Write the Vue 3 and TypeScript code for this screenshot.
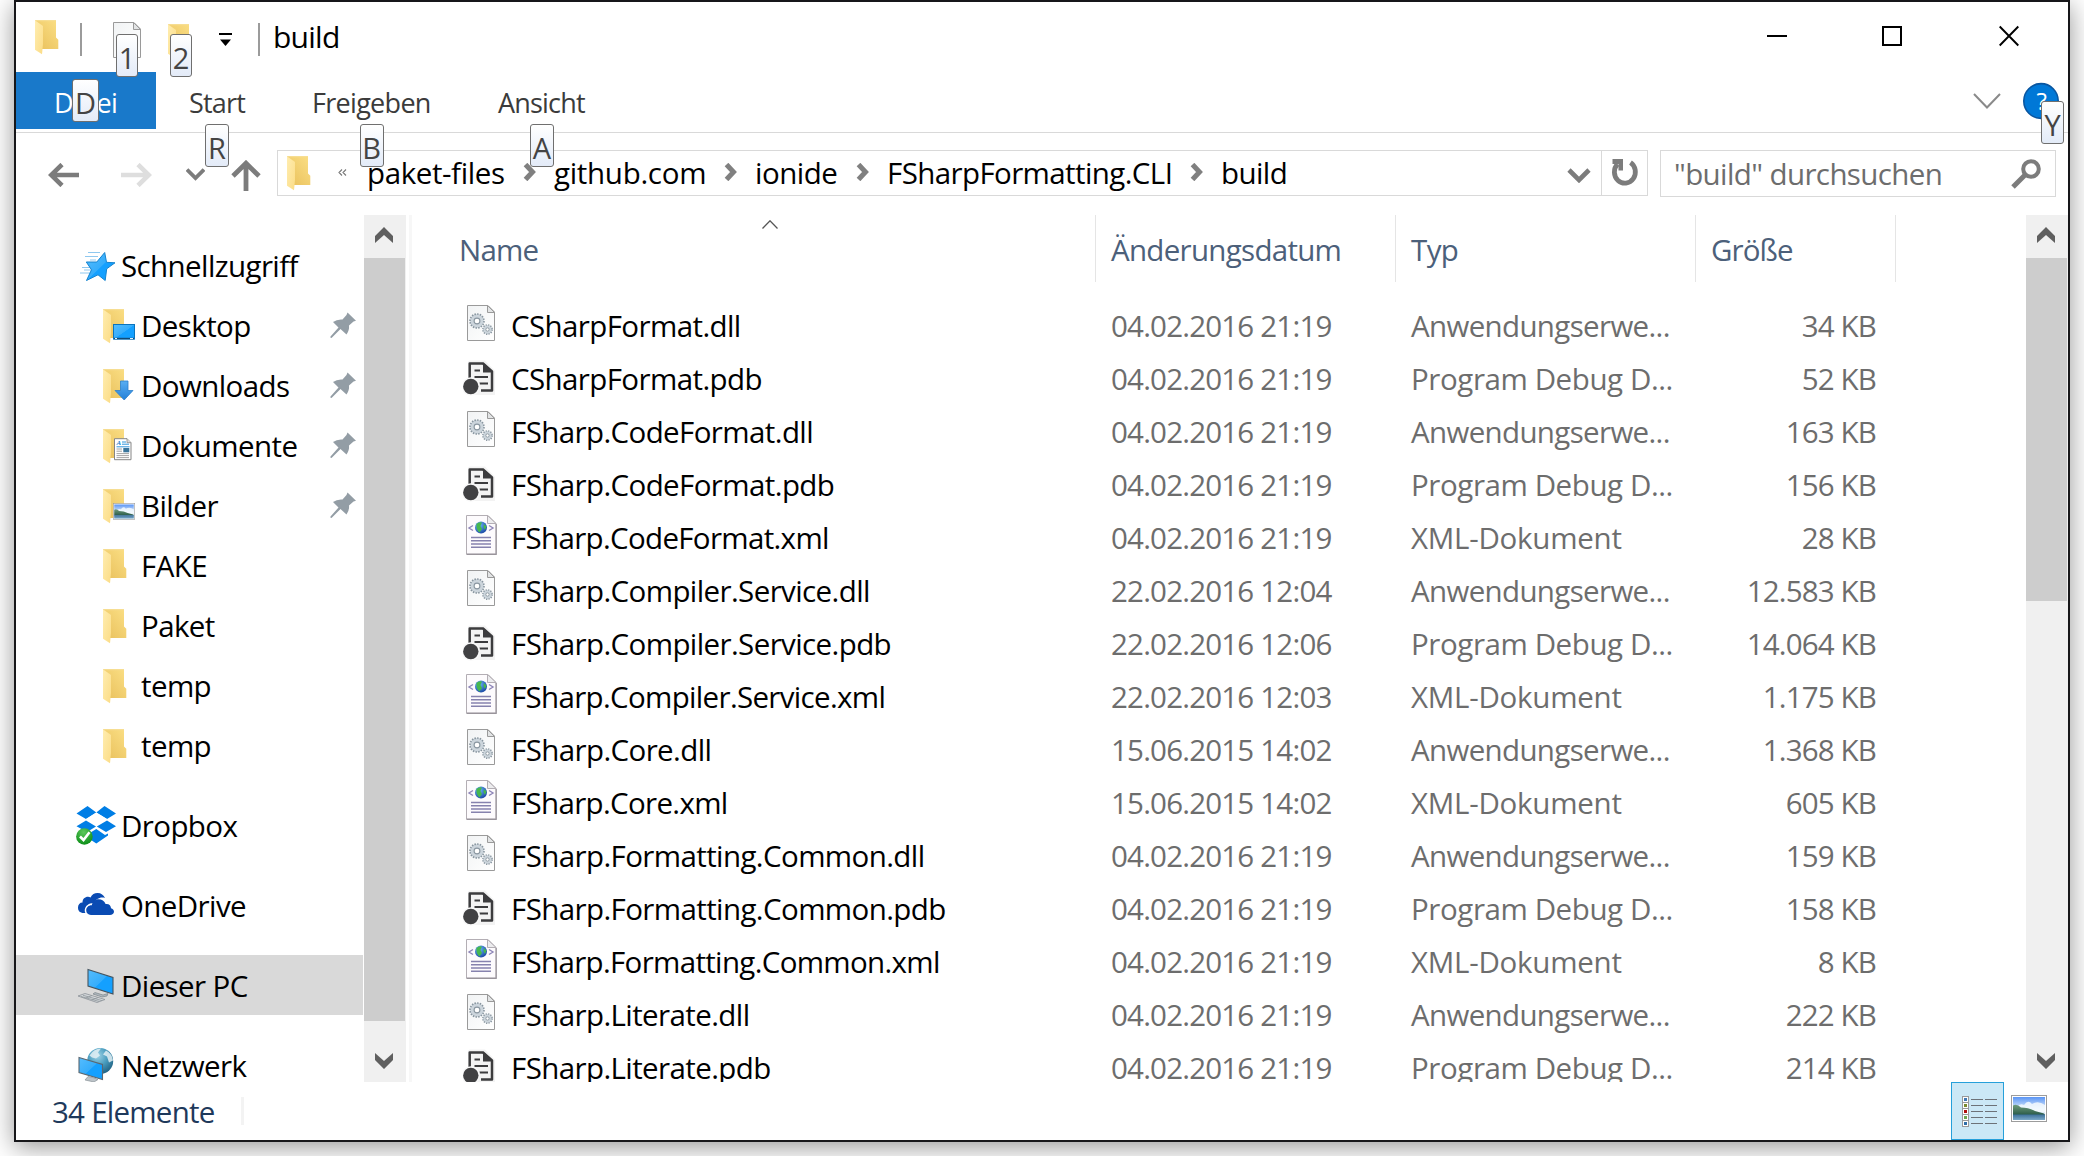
<script setup lang="ts">
interface NavItem {
  label: string
  icon: string
  level: 'root' | 'child'
  pinned?: boolean
  selected?: boolean
  gap?: boolean
}

interface FileItem {
  name: string
  date: string
  kind: 'dll' | 'pdb' | 'xml'
  size: string
}

const tabs = [
  { label: 'Start', key: 'R', cls: 'tab-start' },
  { label: 'Freigeben', key: 'B', cls: 'tab-share' },
  { label: 'Ansicht', key: 'A', cls: 'tab-view' },
]

const crumbs = ['paket-files', 'github.com', 'ionide', 'FSharpFormatting.CLI', 'build']

const navItems: NavItem[] = [
  { label: 'Schnellzugriff', icon: 'star', level: 'root' },
  { label: 'Desktop', icon: 'desktop', level: 'child', pinned: true },
  { label: 'Downloads', icon: 'downloads', level: 'child', pinned: true },
  { label: 'Dokumente', icon: 'documents', level: 'child', pinned: true },
  { label: 'Bilder', icon: 'pictures', level: 'child', pinned: true },
  { label: 'FAKE', icon: 'folder', level: 'child' },
  { label: 'Paket', icon: 'folder', level: 'child' },
  { label: 'temp', icon: 'folder', level: 'child' },
  { label: 'temp', icon: 'folder', level: 'child' },
  { label: 'Dropbox', icon: 'dropbox', level: 'root', gap: true },
  { label: 'OneDrive', icon: 'onedrive', level: 'root', gap: true },
  { label: 'Dieser PC', icon: 'pc', level: 'root', gap: true, selected: true },
  { label: 'Netzwerk', icon: 'network', level: 'root', gap: true },
]

const kinds = {
  dll: 'Anwendungserwe...',
  pdb: 'Program Debug D...',
  xml: 'XML-Dokument',
}

const files: FileItem[] = [
  { name: 'CSharpFormat.dll', date: '04.02.2016 21:19', kind: 'dll', size: '34 KB' },
  { name: 'CSharpFormat.pdb', date: '04.02.2016 21:19', kind: 'pdb', size: '52 KB' },
  { name: 'FSharp.CodeFormat.dll', date: '04.02.2016 21:19', kind: 'dll', size: '163 KB' },
  { name: 'FSharp.CodeFormat.pdb', date: '04.02.2016 21:19', kind: 'pdb', size: '156 KB' },
  { name: 'FSharp.CodeFormat.xml', date: '04.02.2016 21:19', kind: 'xml', size: '28 KB' },
  { name: 'FSharp.Compiler.Service.dll', date: '22.02.2016 12:04', kind: 'dll', size: '12.583 KB' },
  { name: 'FSharp.Compiler.Service.pdb', date: '22.02.2016 12:06', kind: 'pdb', size: '14.064 KB' },
  { name: 'FSharp.Compiler.Service.xml', date: '22.02.2016 12:03', kind: 'xml', size: '1.175 KB' },
  { name: 'FSharp.Core.dll', date: '15.06.2015 14:02', kind: 'dll', size: '1.368 KB' },
  { name: 'FSharp.Core.xml', date: '15.06.2015 14:02', kind: 'xml', size: '605 KB' },
  { name: 'FSharp.Formatting.Common.dll', date: '04.02.2016 21:19', kind: 'dll', size: '159 KB' },
  { name: 'FSharp.Formatting.Common.pdb', date: '04.02.2016 21:19', kind: 'pdb', size: '158 KB' },
  { name: 'FSharp.Formatting.Common.xml', date: '04.02.2016 21:19', kind: 'xml', size: '8 KB' },
  { name: 'FSharp.Literate.dll', date: '04.02.2016 21:19', kind: 'dll', size: '222 KB' },
  { name: 'FSharp.Literate.pdb', date: '04.02.2016 21:19', kind: 'pdb', size: '214 KB' },
]

const thumbColors = ['#3f78b5', '#7a8a2e', '#b01010', '#6aa84f', '#2f6ea8']
</script>

<template>
  <svg class="sprite" aria-hidden="true">
    <defs>
      <linearGradient id="g-back" x1="0" y1="1" x2="1" y2="0">
        <stop offset="0" stop-color="#e8bf5a" />
        <stop offset="1" stop-color="#fbdf85" />
      </linearGradient>
      <linearGradient id="g-front" x1="0" y1="0" x2="1" y2="1">
        <stop offset="0" stop-color="#ffedb0" />
        <stop offset="1" stop-color="#fbdc86" />
      </linearGradient>
      <linearGradient id="g-blue" x1="0" y1="0" x2="1" y2="1">
        <stop offset="0" stop-color="#56bdfd" />
        <stop offset=".5" stop-color="#36adfb" />
        <stop offset=".52" stop-color="#14a0ff" />
        <stop offset="1" stop-color="#14a0ff" />
      </linearGradient>
      <linearGradient id="g-arrow" x1="0" y1="0" x2="0" y2="1">
        <stop offset="0" stop-color="#59aef2" />
        <stop offset="1" stop-color="#2480d8" />
      </linearGradient>
      <linearGradient id="g-page" x1="0" y1="0" x2="1" y2="1">
        <stop offset="0" stop-color="#f1f3f4" />
        <stop offset="1" stop-color="#ffffff" />
      </linearGradient>
      <linearGradient id="g-sky" x1="0" y1="0" x2="0" y2="1">
        <stop offset="0" stop-color="#5a95f5" />
        <stop offset=".55" stop-color="#e4f0fb" />
        <stop offset="1" stop-color="#d5e6f2" />
      </linearGradient>
      <linearGradient id="g-sea" x1="0" y1="0" x2="0" y2="1">
        <stop offset="0" stop-color="#3b6f9a" />
        <stop offset="1" stop-color="#7ba9c8" />
      </linearGradient>
      <linearGradient id="g-hill" x1="0" y1="0" x2="0" y2="1">
        <stop offset="0" stop-color="#6f9c7c" />
        <stop offset="1" stop-color="#2a5a48" />
      </linearGradient>
      <radialGradient id="g-ok" cx=".45" cy=".25" r=".8">
        <stop offset="0" stop-color="#5cc85c" />
        <stop offset="1" stop-color="#068a12" />
      </radialGradient>
      <radialGradient id="g-globe" cx=".4" cy=".3" r=".75">
        <stop offset="0" stop-color="#9fd3e6" />
        <stop offset=".5" stop-color="#4a9dbf" />
        <stop offset="1" stop-color="#1e5f80" />
      </radialGradient>
      <radialGradient id="g-web" cx=".35" cy=".3" r=".8">
        <stop offset="0" stop-color="#6fb7ff" />
        <stop offset="1" stop-color="#123f9c" />
      </radialGradient>
    </defs>

    <symbol id="folder" viewBox="0 0 24 35">
      <path d="M0 .3H21V17.6L23.3 19.8V29H6Z" fill="url(#g-back)" />
      <path d="M0 .3L8 6V24L7 34.3L0 29.8Z" fill="url(#g-front)" />
      <path d="M0 .3H21V1.3H1.5Z" fill="#f6dc8f" />
    </symbol>

    <symbol id="landscape" viewBox="0 0 36 27">
      <rect x=".5" y=".5" width="35" height="26" fill="#fff" stroke="#9c9c9c" />
      <rect x="2" y="2" width="32" height="23" fill="url(#g-sky)" />
      <path d="M6 12Q9 8 13 10Q17 4 21 9Q27 5 34 10V17H6Z" fill="#f5fafe" opacity=".85" />
      <path d="M2 10.500Q6 8.500 10 12.500Q18 12.500 24 16L33 18.500L34 20H2Z" fill="url(#g-hill)" />
      <rect x="2" y="19.500" width="32" height="5.500" fill="url(#g-sea)" />
    </symbol>

    <symbol id="star" viewBox="0 0 40 40">
      <g transform="translate(2 3)">
        <path d="M10 4.500H22M7 8.500H20M12 12H18M4 19.500H13M6 22H14M2 25H12" stroke="#8fc8ef" stroke-width="1" />
        <path d="M26.700 4.500L28.500 14.300L37 14.800L28.700 20.800L27.200 32.500L20 26.800L8.500 32.500L13.500 21.800L8.300 14L18.800 14Z"
          fill="url(#g-blue)" stroke="#1583cf" stroke-width="1" stroke-linejoin="round" />
      </g>
    </symbol>

    <symbol id="desktop" viewBox="0 0 34 36">
      <use href="#folder" x="1" y="0" width="24" height="35" />
      <rect x="11.5" y="15.500" width="21" height="14.6" fill="url(#g-blue)" stroke="#0b74bd" />
      <path d="M12 29.500H32" stroke="#134a73" stroke-width="1.4" />
      <path d="M13 29.500H15M28 29.500H31" stroke="#e6f4fd" stroke-width="1.2" />
    </symbol>

    <symbol id="downloads" viewBox="0 0 34 36">
      <use href="#folder" x="1" y="0" width="24" height="35" />
      <path d="M18.5 12H26V21.5H31L22.2 31L13 21.5H18.5Z" fill="url(#g-arrow)" stroke="#2b7fcc" stroke-width=".8" />
    </symbol>

    <symbol id="documents" viewBox="0 0 34 36">
      <use href="#folder" x="1" y="0" width="24" height="35" />
      <path d="M12.5 9.7H25L29 13.7V30.7H12.5Z" fill="#fff" stroke="#858585" />
      <path d="M25 9.7V13.7H29" fill="#ddd" stroke="#858585" stroke-width=".8" />
      <text x="14.5" y="16" class="doc-letter">A</text>
      <path d="M20 13H24M20 15.2H27M14.5 17.8H27.5" stroke="#2f95da" stroke-width="1" />
      <path d="M14.5 20H20M14.5 22.2H20M14.5 24.6H27M14.5 26.6H27M14.5 28.6H27" stroke="#9a9a9a" stroke-width=".9" />
      <rect x="21.3" y="19" width="6" height="4.3" fill="#39759b" />
    </symbol>

    <symbol id="pictures" viewBox="0 0 34 36">
      <use href="#folder" x="1" y="0" width="24" height="35" />
      <use href="#landscape" x="11" y="14" width="22" height="17" />
    </symbol>

    <symbol id="dropbox" viewBox="0 0 40 40">
      <path d="M11.500 1L20.300 7.500L10 14L0.500 8.500Z M28.500 1L40 8.500L31 14L20.300 7.500Z M10 15.500L20 21.500L11 27L.5 21.300Z M31 15.500L40 21.300L30 27L20.800 21.500Z"
        fill="#007ee5" />
      <path d="M20.300 24L29 30L32 28.500V30.500L20.300 38.500L12 33V29Z" fill="#007ee5" />
      <path d="M20.300 7.500L31 14L20.300 20.500L10 14Z" fill="#fff" />
      <circle cx="8.400" cy="31.500" r="8.300" fill="url(#g-ok)" />
      <path d="M4 31.500L7.500 35L13.500 27.300" fill="none" stroke="#fff" stroke-width="2.6" />
    </symbol>

    <symbol id="onedrive" viewBox="0 0 40 40">
      <path d="M8 28C3.500 28 2 25.500 2 22.500C2 19.500 3.800 17.500 6.500 17.500C6.500 14 9 11.800 12 11.800C13 11.800 13.800 12 14.500 12.400C16 9.500 18.500 8 21.500 8C25 8 27.800 10 29 13C24.500 11.500 19.500 14 18.500 18C13.500 17.500 9.500 20.500 8.800 24.500C8.600 26 9 27.500 9.500 28Z" fill="#0a4bb3" />
      <path d="M15 30C12 30 10.200 28 10.200 25.300C10.200 22.200 12.800 20 15.800 20.200C16.500 16.500 19 14.200 22.500 14.200C25.800 14.200 28.500 16 29.600 19C33 18.500 35 20.500 35 23.300C36.700 23.500 38 25 38 26.700C38 28.600 36.200 30 34 30Z" fill="#0a4bb3" />
    </symbol>

    <symbol id="pc" viewBox="0 0 40 40">
      <path d="M12 4.500L37 12.500V29L12 21Z" fill="url(#g-blue)" stroke="#45545f" stroke-width="1.1" />
      <path d="M19 27.500L27 30L32 28.500L31 31L26 32L17 29Z" fill="#aeb6bc" stroke="#707a82" stroke-width=".6" />
      <path d="M2 31L9 28.500L29 34.500L21 37.500Z" fill="#d3d7da" stroke="#8b9298" stroke-width=".8" />
      <path d="M5 31.500L23 36.400M7 30.300L26 35.600M10 33L16 30.500M16 35L22 32.500" stroke="#8e959a" stroke-width=".8" />
    </symbol>

    <symbol id="network" viewBox="0 0 40 40">
      <circle cx="24.200" cy="16" r="13" fill="url(#g-globe)" />
      <path d="M13.500 10.500Q18 3.500 25 3.500L22 7.500L24 10.500L20 13.500L16 12.500Z M30 5.500Q36 8.500 37 15.500L33 17.500L31 11.500L27 9.500Z" fill="#e3f0f5" opacity=".85" />
      <path d="M3 12.500L26.500 19.500V34.500L3 27.500Z" fill="url(#g-blue)" stroke="#5b6770" stroke-width="1.1" />
      <path d="M12 31.500L17 32.500L22 34.500L18 37L9 35Z" fill="#bcc3c8" stroke="#7b848b" stroke-width=".6" />
    </symbol>

    <symbol id="pin" viewBox="0 0 26 27">
      <path d="M17.500 .5L26 8.700L23.500 9.500L19 13.500Q19.500 18.500 16.500 22.500L10.500 17L1.500 26L.3 25.500L.5 24.500L8.500 15.500L3 10Q7 7 12.500 7.500L16.500 3Z"
        fill="#939da5" />
    </symbol>

    <symbol id="page" viewBox="0 0 28 36">
      <path d="M.5 .5H21L27.500 7V35.500H.5Z" fill="url(#g-page)" stroke="#9a9a9a" />
      <path d="M20.500 .5V7.500H27.500Z" fill="#e2e4e5" stroke="#9a9a9a" />
    </symbol>

    <symbol id="dll" viewBox="0 0 34 40">
      <use href="#page" x="4" y="2" width="28" height="36" />
      <circle cx="14" cy="18" r="5" fill="none" stroke="#ccd5dc" stroke-width="3.800" />
      <circle cx="14" cy="18" r="7" fill="none" stroke="#8996a0" stroke-width="1.600" stroke-dasharray="1.500 1.240" />
      <circle cx="14" cy="18" r="2.900" fill="#fff" stroke="#8996a0" stroke-width="1.100" />
      <circle cx="24.500" cy="26.500" r="3.300" fill="none" stroke="#ccd5dc" stroke-width="2.600" />
      <circle cx="24.500" cy="26.500" r="4.700" fill="none" stroke="#8996a0" stroke-width="1.400" stroke-dasharray="1.300 1.160" />
      <circle cx="24.500" cy="26.500" r="1.700" fill="#fff" stroke="#8996a0" stroke-width="1" />
    </symbol>

    <symbol id="pdb" viewBox="0 0 34 40">
      <path d="M5 3.500Q5 1.500 7 1.500H22L32 12V36H5Z" fill="#f3f3f3" />
      <path d="M6.700 19V4.500H20L29 12.500V31.500H18" fill="none" stroke="#3c3c3e" stroke-width="2.500" stroke-linejoin="round" />
      <path d="M20 3.500L30 13.500H20Z" fill="#3c3c3e" />
      <path d="M11.500 11.500H17M11.500 18H25M16.500 24.500H25" stroke="#3c3c3e" stroke-width="2.200" />
      <circle cx="7.800" cy="27.500" r="9.300" fill="#f8f8f8" />
      <circle cx="7.800" cy="27.500" r="7.700" fill="#414143" />
    </symbol>

    <symbol id="xml" viewBox="0 0 34 42">
      <path d="M3.500 1.500H25L33 9.500V40H3.500Z" fill="#fdfbfd" stroke="#b3aeb4" />
      <path d="M3.500 40.300H33.200V10" fill="none" stroke="#99949b" stroke-width="1.200" />
      <path d="M24.500 1.500V9.500H33Z" fill="#ececee" stroke="#b3aeb4" />
      <circle cx="18" cy="13.500" r="6" fill="url(#g-web)" />
      <path d="M13.500 10Q16 7.500 19 8.500L17.500 12L19 15L16.500 18.500Q13 16 13.500 10Z M21 10L23.500 12.500L22 16L20.500 13Z" fill="#47b84f" />
      <path d="M10 11.500L6 14L10 16.500M26 11.500L30 14L26 16.500" fill="none" stroke="#8e86b8" stroke-width="1.400" />
      <path d="M8 23.500H28M8 26.700H28M8 30H28M8 33.200H28" stroke="#8682ae" stroke-width="1.400" />
    </symbol>
  </svg>

  <main class="window">
    <header class="titlebar">
      <svg class="title-folder"><use href="#folder" /></svg>
      <i class="bar bar-one"></i>
      <span class="quick quick-page">
        <svg width="28" height="36"><use href="#page" /></svg>
        <kbd class="tip tip-1">1</kbd>
      </span>
      <span class="quick quick-folder">
        <svg width="24" height="35"><use href="#folder" /></svg>
        <kbd class="tip tip-2">2</kbd>
      </span>
      <svg class="customize" viewBox="0 0 13 14"><path d="M0 1H13" stroke="#000" stroke-width="2" /><path d="M1 6.500H12L6.500 13Z" /></svg>
      <i class="bar bar-two"></i>
      <h1>build</h1>
      <div class="controls">
        <svg width="20" height="22" viewBox="0 0 20 22"><path d="M0 11H20" stroke="#000" stroke-width="2" /></svg>
        <svg class="maximize" width="20" height="22" viewBox="0 0 20 22"><path d="M1 2H19V20H1Z" fill="none" stroke="#000" stroke-width="2" /></svg>
        <svg width="20" height="22" viewBox="0 0 20 22"><path d="M.7 1.500L19.300 20.500M19.300 1.500L.7 20.500" stroke="#000" stroke-width="1.900" /></svg>
      </div>
    </header>

    <nav class="ribbon">
      <span class="file-tab"><span>Datei</span><kbd class="tip tip-d">D</kbd></span>
      <span v-for="t in tabs" :key="t.label" class="tab" :class="t.cls">{{ t.label }}<kbd class="tip">{{ t.key }}</kbd></span>
      <svg class="expand" viewBox="0 0 28 17"><path d="M1 1L14 14.500L27 1" fill="none" stroke="#8a8a8a" stroke-width="2" /></svg>
      <span class="help">
        <svg width="38" height="40" viewBox="0 0 38 40">
          <ellipse cx="19" cy="20" rx="17.200" ry="17.400" fill="#0078d7" stroke="#0a56a0" stroke-width="1.600" />
          <text x="19.500" y="28.500" class="help-mark">?</text>
        </svg>
        <kbd class="tip tip-y">Y</kbd>
      </span>
    </nav>

    <section class="navbar">
      <svg class="back" viewBox="0 0 31 24"><path d="M31 12H3M14 1.500L3.200 12L14 22.500" fill="none" stroke="#7c7c7c" stroke-width="4.600" /></svg>
      <svg class="forward" viewBox="0 0 31 24"><path d="M0 12H28M17 1.500L27.800 12L17 22.500" fill="none" stroke="#dedede" stroke-width="4.600" /></svg>
      <svg class="recent" viewBox="0 0 19 13"><path d="M1 1.500L9.500 10L18 1.500" fill="none" stroke="#7c7c7c" stroke-width="3.800" /></svg>
      <svg class="up" viewBox="0 0 30 31"><path d="M15 31V4M2 16L15 3.200L28 16" fill="none" stroke="#7c7c7c" stroke-width="4.800" /></svg>
      <div class="address">
        <svg class="addr-folder"><use href="#folder" /></svg>
        <svg class="overflow" viewBox="0 0 9 7"><path d="M4 .5L1 3.500L4 6.500M8 .5L5 3.500L8 6.500" fill="none" stroke="#777" stroke-width="1.100" /></svg>
        <template v-for="(c, i) in crumbs" :key="c">
          <svg v-if="i > 0" class="crumb-sep" viewBox="0 0 13 18"><path d="M2.500 1.500L9.500 9L2.500 16.500" fill="none" stroke="#808080" stroke-width="5" /></svg>
          <span class="crumb" :class="'crumb-' + i">{{ c }}</span>
        </template>
        <svg class="addr-drop" viewBox="0 0 23 15"><path d="M1.500 2L11.500 12L21.500 2" fill="none" stroke="#7c7c7c" stroke-width="4.600" /></svg>
        <span class="refresh">
          <svg width="30" height="32" viewBox="0 0 30 32">
            <path d="M20.500 5.500A10.500 11.200 0 1 1 7.500 7" fill="none" stroke="#7c7c7c" stroke-width="4.800" />
            <path d="M2.500 2H13V13.500H8.500V7H2.500Z" fill="#7c7c7c" />
          </svg>
        </span>
      </div>
      <div class="search">
        <span>"build" durchsuchen</span>
        <svg width="30" height="30" viewBox="0 0 30 30"><circle cx="20" cy="10" r="7.800" fill="none" stroke="#7c7c7c" stroke-width="4" /><path d="M14.500 15.500L2 28" stroke="#7c7c7c" stroke-width="5" /></svg>
      </div>
    </section>

    <section class="body">
      <aside class="tree">
        <div v-for="(n, i) in navItems" :key="i" class="node" :class="[n.level, { selected: n.selected, gap: n.gap }]">
          <svg v-if="n.icon === 'folder'" class="node-icon plain"><use href="#folder" /></svg>
          <svg v-else class="node-icon"><use :href="'#' + n.icon" /></svg>
          <span class="node-label">{{ n.label }}</span>
          <svg v-if="n.pinned" class="node-pin"><use href="#pin" /></svg>
        </div>
      </aside>
      <div class="scroll scroll-tree">
        <svg viewBox="0 0 18 16"><path d="M0 9L9 0L18 9V16L9 8L0 16Z" /></svg>
        <i class="thumb"></i>
        <svg viewBox="0 0 18 16"><path d="M0 0L9 8L18 0V7L9 16L0 7Z" /></svg>
      </div>
      <i class="split"></i>
      <div class="list">
        <div class="columns">
          <span class="col-name">Name<svg class="sort" viewBox="0 0 16 9"><path d="M.5 8.500L8 .8L15.500 8.500" fill="none" stroke="#555" stroke-width="1.300" /></svg></span>
          <span class="col-date">Änderungsdatum</span>
          <span>Typ</span>
          <span class="col-size">Größe</span>
        </div>
        <div v-for="f in files" :key="f.name" class="row">
          <svg class="file-icon" :class="f.kind"><use :href="'#' + f.kind" /></svg>
          <span class="name" :class="'name-' + f.kind">{{ f.name }}</span>
          <span class="meta date">{{ f.date }}</span>
          <span class="meta" :class="'kind-' + f.kind">{{ kinds[f.kind] }}</span>
          <span class="meta size">{{ f.size }}</span>
        </div>
      </div>
      <div class="scroll scroll-list">
        <svg viewBox="0 0 18 16"><path d="M0 9L9 0L18 9V16L9 8L0 16Z" /></svg>
        <i class="thumb"></i>
        <svg viewBox="0 0 18 16"><path d="M0 0L9 8L18 0V7L9 16L0 7Z" /></svg>
      </div>
    </section>

    <footer class="status">
      <span class="count">34 Elemente</span>
      <i class="status-sep"></i>
      <span class="view-details">
        <svg width="35" height="31" viewBox="0 0 35 31">
          <g v-for="(c, i) in thumbColors" :key="c">
            <rect x=".5" :y="0.5 + i * 6" width="6" height="6" fill="#fff" stroke="#9a9a9a" />
            <rect x="2" :y="2 + i * 6" width="3" height="3" :fill="c" />
            <path :d="`M9 ${3.5 + i * 6}H21M23 ${3.5 + i * 6}H35`" stroke="#6d7278" stroke-width="1" />
          </g>
        </svg>
      </span>
      <svg class="view-large"><use href="#landscape" /></svg>
    </footer>
  </main>
</template>

<style>
html {
  background: #fff;
}
#app {
  height: 1156px;
}
</style>

<style scoped>
.sprite {
  position: absolute;
  width: 0;
  height: 0;
}
.doc-letter {
  font: italic bold 7px 'Liberation Serif', serif;
  fill: #1b7fc9;
}
.help-mark {
  font: 24px 'Open Sans', sans-serif;
  fill: #fff;
  text-anchor: middle;
}
.window {
  display: flex;
  flex-direction: column;
  box-sizing: border-box;
  width: 2056px;
  height: 1142px;
  margin-left: 14px;
  border: 2px solid #17171a;
  background: #fff;
  box-shadow: 0 5px 24px rgba(0, 0, 0, 0.42);
  font-family: 'Open Sans', 'Noto Sans', sans-serif;
  font-size: 29.5px;
  letter-spacing: -0.6px;
  color: #000;
  white-space: nowrap;
}
svg {
  display: block;
  flex: none;
}
i {
  flex: none;
}
.tip {
  position: absolute;
  z-index: 2;
  box-sizing: border-box;
  width: 24px;
  height: 43px;
  border: 1px solid #6f6f6f;
  border-radius: 3px;
  background: linear-gradient(#fff, #e3ebf8);
  font-family: inherit;
  font-size: 29px;
  line-height: 45px;
  text-align: center;
  letter-spacing: 0;
  color: #444;
}

.titlebar {
  display: flex;
  align-items: flex-start;
  height: 70px;
}
.title-folder {
  width: 24px;
  height: 35px;
  margin: 18px 0 0 19px;
}
.bar {
  width: 2px;
  height: 33px;
  margin-top: 21px;
  background: #9b9b9b;
}
.bar-one {
  margin-left: 21px;
}
.bar-two {
  margin-left: 26px;
}
.quick {
  position: relative;
}
.quick-page {
  margin: 20px 0 0 31px;
}
.quick-folder {
  margin: 22px 0 0 27px;
}
.tip-1 {
  left: 3px;
  top: 12px;
  width: 22px;
}
.tip-2 {
  left: 2px;
  top: 10px;
  width: 22px;
}
.customize {
  width: 13px;
  height: 14px;
  margin: 31px 0 0 27px;
}
h1 {
  margin: 0 auto 0 13px;
  font-size: 30px;
  font-weight: 400;
  line-height: 70px;
  letter-spacing: -0.75px;
}
.controls {
  display: flex;
  gap: 96px;
  margin: 23px 49px 0 0;
}
.maximize {
  margin: 0 1px 0 -1px;
}

.ribbon {
  display: flex;
  height: 60px;
  border-bottom: 1px solid #d9d9d9;
  font-size: 27px;
  line-height: 62px;
  color: #3b3b3b;
}
.file-tab {
  position: relative;
  width: 140px;
  height: 57px;
  background: #1979ca;
  color: #fff;
}
.file-tab > span {
  margin-left: 38px;
}
.tip-d {
  left: 56px;
  top: 7px;
  width: 27px;
}
.tab {
  position: relative;
}
.tab .tip {
  top: 52px;
  left: calc(50% - 11px);
}
.tab-start {
  margin-left: 33px;
  width: 54px;
  letter-spacing: -0.8px;
}
.tab-share {
  margin-left: 69px;
  width: 117px;
  letter-spacing: -0.7px;
}
.tab-view {
  margin-left: 69px;
  width: 86px;
  letter-spacing: -0.8px;
}
.expand {
  width: 28px;
  height: 17px;
  margin: 21px 21px 0 auto;
}
.help {
  position: relative;
  margin: 9px 8px 0 0;
}
.tip-y {
  left: 19px;
  top: 20px;
  width: 23px;
}

.navbar {
  display: flex;
  align-items: flex-start;
  height: 82px;
}
.back {
  width: 31px;
  height: 24px;
  margin: 30px 0 0 32px;
}
.forward {
  width: 31px;
  height: 24px;
  margin: 30px 0 0 42px;
}
.recent {
  width: 19px;
  height: 13px;
  margin: 35px 0 0 34px;
}
.up {
  width: 30px;
  height: 31px;
  margin: 27px 0 0 26px;
}
.address {
  display: flex;
  align-items: center;
  box-sizing: border-box;
  width: 1371px;
  height: 46px;
  margin: 17px 0 0 16px;
  border: 1px solid #d9d9d9;
  line-height: 46px;
}
.addr-folder {
  width: 24px;
  height: 35px;
  margin: 0 0 0 9px;
}
.overflow {
  width: 9px;
  height: 7px;
  margin: -2px 20px 0 27px;
}
.crumb {
  flex: none;
}
.crumb-sep {
  width: 13px;
  height: 18px;
  margin: -2px 18px 0 19px;
}
.crumb-0 {
  width: 137px;
  letter-spacing: -0.4px;
}
.crumb-1 {
  width: 151px;
  letter-spacing: -0.3px;
}
.crumb-2 {
  width: 82px;
  letter-spacing: -0.5px;
}
.crumb-3 {
  width: 284px;
}
.addr-drop {
  width: 24px;
  height: 15px;
  margin: 4px 10px 0 auto;
}
.refresh {
  display: flex;
  align-items: center;
  justify-content: center;
  width: 46px;
  height: 44px;
  padding-left: 1px;
  box-sizing: border-box;
  border-left: 1px solid #d9d9d9;
}
.search {
  display: flex;
  align-items: center;
  justify-content: space-between;
  box-sizing: border-box;
  width: 396px;
  height: 47px;
  margin: 17px 0 0 12px;
  padding: 0 14px 0 13px;
  border: 1px solid #d9d9d9;
  line-height: 48px;
  color: #6d6d6d;
}

.body {
  display: flex;
  height: 867px;
}
.tree {
  width: 348px;
  padding-top: 20px;
  height: 847px;
  overflow: hidden;
}
.node {
  display: flex;
  align-items: center;
  width: 347px;
  height: 60px;
}
.node.gap {
  margin-top: 20px;
}
.node.root {
  padding-left: 60px;
  box-sizing: border-box;
}
.node.child {
  padding-left: 86px;
  box-sizing: border-box;
}
.node.selected {
  background: #d9d9d9;
}
.node-icon {
  width: 40px;
  height: 40px;
}
.child .node-icon {
  width: 34px;
  height: 36px;
  margin-top: 3px;
}
.child .node-icon.plain {
  width: 24px;
  height: 35px;
  margin: 3px 9px 0 1px;
}
.node-label {
  margin-left: 5px;
}
.node-pin {
  width: 26px;
  height: 27px;
  margin: 1px 7px 0 auto;
}
.scroll {
  display: flex;
  flex-direction: column;
  justify-content: space-between;
  align-items: flex-start;
  width: 42px;
  height: 867px;
  background: #f0f0f0;
}
.scroll svg {
  width: 18px;
  height: 16px;
  fill: #5f5f5f;
}
.scroll svg:first-child {
  margin: 12px 0 0 11px;
}
.scroll svg:last-child {
  margin: auto 0 13px 11px;
}
.thumb {
  width: 41px;
  margin-top: 15px;
  background: #cdcdcd;
}
.scroll-tree .thumb {
  height: 763px;
}
.scroll-list .thumb {
  height: 343px;
}
.split {
  width: 3px;
  margin-left: 3px;
  background: #f7f7f7;
}
.list {
  width: 1614px;
  height: 867px;
  overflow: hidden;
}
.columns {
  display: grid;
  grid-template-columns: 684px 300px 300px 200px;
  height: 67px;
  margin-bottom: 17px;
  line-height: 70px;
  color: #4c607a;
}
.columns span {
  box-sizing: border-box;
  height: 67px;
  border-right: 1px solid #e5e5e5;
  padding-left: 15px;
}
.columns .col-name {
  position: relative;
  padding-left: 47px;
  letter-spacing: -0.8px;
}
.col-date {
  letter-spacing: -0.7px;
}
.col-size {
  letter-spacing: -0.9px;
}
.sort {
  position: absolute;
  left: 350px;
  top: 5px;
  width: 16px;
  height: 9px;
}
.row {
  display: grid;
  grid-template-columns: 48px 51px 600px 300px 165px 300px;
  align-items: center;
  height: 53px;
  line-height: 53px;
}
.file-icon {
  grid-column: 2;
  width: 34px;
  height: 40px;
  margin: -5px 0 0 3px;
}
.file-icon.pdb {
  margin: 0 0 0 3px;
}
.file-icon.xml {
  height: 42px;
}
.name {
  letter-spacing: -0.6px;
}
.name-xml {
  letter-spacing: -0.67px;
}
.meta {
  color: #6d6d6d;
}
.date {
  letter-spacing: -0.8px;
}
.kind-dll {
  letter-spacing: -0.65px;
}
.kind-pdb {
  letter-spacing: -0.42px;
}
.kind-xml {
  letter-spacing: -0.25px;
}
.size {
  text-align: right;
  letter-spacing: -0.85px;
}

.status {
  display: flex;
  align-items: flex-start;
  height: 58px;
  line-height: 60px;
  color: #1e395b;
}
.count {
  width: 189px;
  padding-left: 36px;
  letter-spacing: -0.75px;
}
.status-sep {
  width: 3px;
  height: 28px;
  margin-top: 15px;
  background: #f3f3f3;
}
.view-details {
  box-sizing: border-box;
  width: 53px;
  height: 58px;
  margin-left: auto;
  padding: 13px 0 0 10px;
  border: 1px solid #26a0da;
  background: #cbe8f6;
}
.view-large {
  width: 36px;
  height: 27px;
  margin: 13px 21px 0 7px;
}
</style>
